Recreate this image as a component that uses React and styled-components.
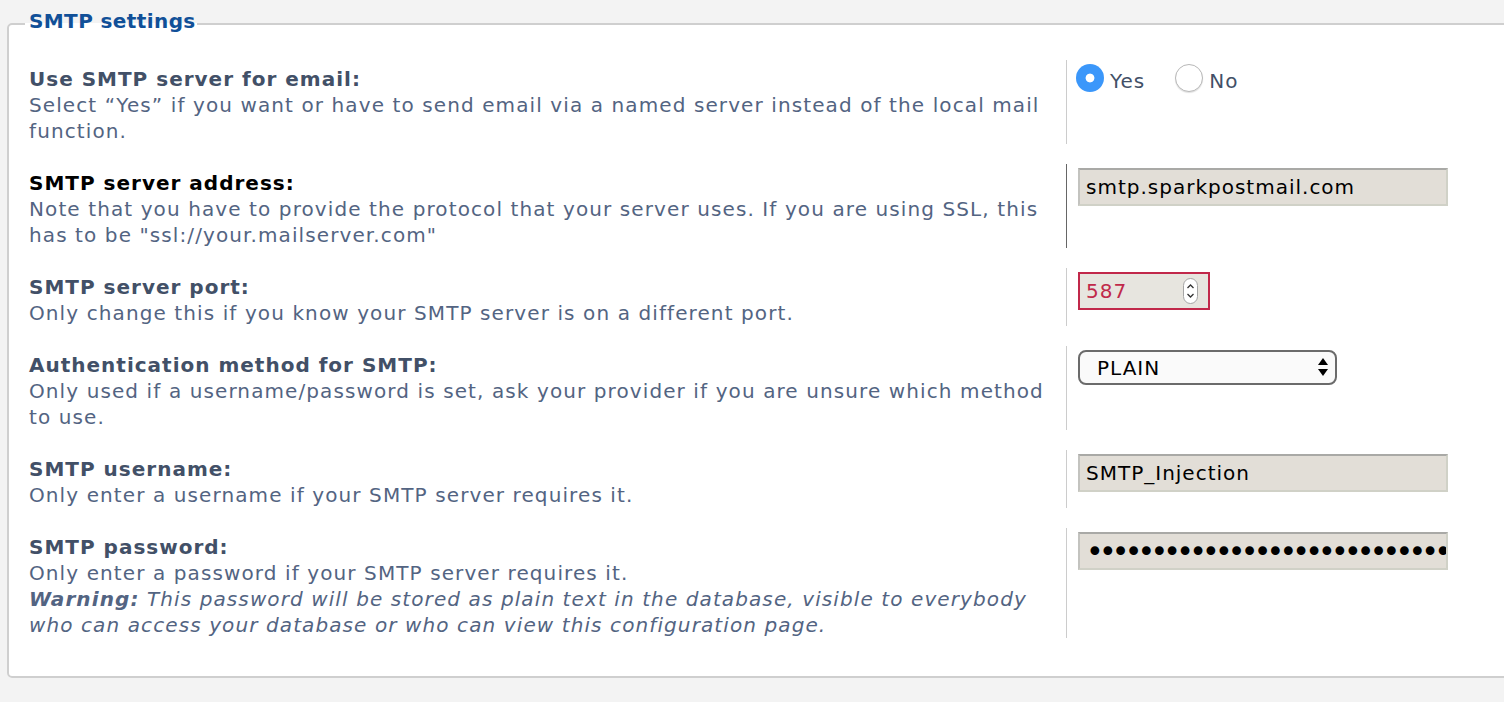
import React from 'react';
import styled, { createGlobalStyle } from 'styled-components';

const GlobalStyle = createGlobalStyle`
  html, body {
    margin: 0;
    background: #f3f3f3;
    overflow: hidden;
  }
  body {
    font-family: "DejaVu Sans", Verdana, sans-serif;
    letter-spacing: 1.1px;
  }
`;

const Page = styled.div`
  width: 1560px;
  padding: 8px 0 24px 7px;
`;

const Fieldset = styled.fieldset`
  margin: 0;
  border: 2px solid #cfcfcf;
  border-radius: 5px;
  background: #ffffff;
  padding: 20px 0 38px 20px;
`;

const Legend = styled.legend`
  margin-left: -4px;
  padding: 0 1px 6px 4px;
  font-size: 20px;
  line-height: 26px;
  font-weight: bold;
  letter-spacing: 0.4px;
  color: #115098;
`;

const Rows = styled.div`
  display: flex;
  flex-direction: column;
  gap: 20px;
`;

const Row = styled.dl`
  display: grid;
  grid-template-columns: 1037px 1fr;
  margin: 0;
`;

const Term = styled.dt`
  padding: 6px 10px 0 0;
  font-size: 20px;
  line-height: 26px;
`;

const Label = styled.label`
  display: block;
  font-weight: bold;
  letter-spacing: 1px;
  color: ${p => (p.$active ? '#000000' : '#425067')};
`;

const Explain = styled.span`
  display: block;
  color: #536482;
`;

const Warning = styled.em`
  strong {
    font-weight: bold;
  }
`;

const Def = styled.dd`
  margin: 0;
  border-left: 1px solid ${p => (p.$active ? '#666666' : '#cccccc')};
  padding: 4px 0 0 11px;
`;

const RadioGroup = styled.div`
  display: flex;
  align-items: center;
  height: 28px;
  margin-left: -2px;
`;

const RadioLabel = styled.label`
  display: inline-flex;
  align-items: center;
  gap: 6px;
  margin-right: 30px;
  font-size: 20px;
  letter-spacing: 1px;
  color: #425067;
  padding-top: 5px;
`;

const Radio = styled.input`
  appearance: none;
  margin: -5px 0 0 0;
  width: 28px;
  height: 28px;
  border-radius: 50%;
  box-sizing: border-box;
  background: #ffffff;
  border: 1px solid #b8b8b8;
  box-shadow: 0 1px 1px rgba(0, 0, 0, 0.12);

  &:checked {
    border: none;
    box-shadow: none;
    background: radial-gradient(circle, #ffffff 0 4px, #3b97fa 4.8px);
  }
`;

const TextInput = styled.input`
  box-sizing: border-box;
  width: 370px;
  height: 38px;
  margin: 0;
  padding: 0 0 0 6px;
  border-style: solid;
  border-width: 2px;
  border-color: #a9a9a6 #d0d1c7 #d0d1c7 #c3c3bf;
  background: #e2ded7;
  font-family: "DejaVu Sans", Verdana, sans-serif;
  font-size: ${p => (p.type === 'password' ? '30px' : '20px')};
  letter-spacing: ${p => (p.type === 'password' ? '-4.8px' : '1px')};
  color: #000000;
  outline: none;
`;

const PortBox = styled.div`
  box-sizing: border-box;
  display: flex;
  align-items: center;
  width: 132px;
  height: 38px;
  border: 2px solid #c1284a;
  background: #e7e5df;
  padding: 0 10px 0 6px;
`;

const PortInput = styled.input`
  flex: 1;
  min-width: 0;
  border: none;
  padding: 0;
  background: transparent;
  font-family: "DejaVu Sans", Verdana, sans-serif;
  font-size: 20px;
  letter-spacing: 1px;
  color: #c0294a;
  outline: none;
`;

const Spinner = styled.span`
  box-sizing: border-box;
  display: flex;
  align-items: center;
  justify-content: center;
  width: 15px;
  height: 26px;
  border-radius: 8px;
  background: #ffffff;
  border: 1px solid #a5a5a5;
`;

const SelectWrap = styled.div`
  position: relative;
  width: 259px;
  height: 35px;
`;

const Select = styled.select`
  appearance: none;
  box-sizing: border-box;
  width: 100%;
  height: 100%;
  margin: 0;
  padding: 0 0 0 17px;
  border: 2px solid #6b6b6b;
  border-radius: 8px;
  background: #fafafa;
  font-family: "DejaVu Sans", Verdana, sans-serif;
  font-size: 20px;
  letter-spacing: 1px;
  color: #000000;
  outline: none;
`;

const SelectArrows = styled.svg`
  position: absolute;
  right: 9px;
  top: 8px;
  pointer-events: none;
`;

const App = () => {
  return (
    <>
      <GlobalStyle />
      <Page>
        <Fieldset>
          <Legend>SMTP settings</Legend>
          <Rows>
            <Row>
              <Term>
                <Label>Use SMTP server for email:</Label>
                <Explain>
                  Select “Yes” if you want or have to send email via a named server instead of the local mail function.
                </Explain>
              </Term>
              <Def>
                <RadioGroup>
                  <RadioLabel>
                    <Radio type="radio" name="smtp" defaultChecked />
                    Yes
                  </RadioLabel>
                  <RadioLabel>
                    <Radio type="radio" name="smtp" />
                    No
                  </RadioLabel>
                </RadioGroup>
              </Def>
            </Row>

            <Row>
              <Term>
                <Label $active>SMTP server address:</Label>
                <Explain>
                  Note that you have to provide the protocol that your server uses. If you are using SSL, this has to be "ssl://your.mailserver.com"
                </Explain>
              </Term>
              <Def $active>
                <TextInput type="text" defaultValue="smtp.sparkpostmail.com" />
              </Def>
            </Row>

            <Row>
              <Term>
                <Label>SMTP server port:</Label>
                <Explain>Only change this if you know your SMTP server is on a different port.</Explain>
              </Term>
              <Def>
                <PortBox>
                  <PortInput type="text" defaultValue="587" />
                  <Spinner>
                    <svg width="9" height="18" viewBox="0 0 9 18" fill="none" stroke="#333" strokeWidth="1.3">
                      <path d="M1.5 6 L4.5 3 L7.5 6" />
                      <path d="M1.5 12 L4.5 15 L7.5 12" />
                    </svg>
                  </Spinner>
                </PortBox>
              </Def>
            </Row>

            <Row>
              <Term>
                <Label>Authentication method for SMTP:</Label>
                <Explain>
                  Only used if a username/password is set, ask your provider if you are unsure which method to use.
                </Explain>
              </Term>
              <Def>
                <SelectWrap>
                  <Select defaultValue="PLAIN">
                    <option>PLAIN</option>
                    <option>LOGIN</option>
                    <option>CRAM-MD5</option>
                  </Select>
                  <SelectArrows width="10" height="19" viewBox="0 0 10 19">
                    <path d="M5 0 L10 7 L0 7 Z" fill="#000" />
                    <path d="M0 11 L10 11 L5 18 Z" fill="#000" />
                  </SelectArrows>
                </SelectWrap>
              </Def>
            </Row>

            <Row>
              <Term>
                <Label>SMTP username:</Label>
                <Explain>Only enter a username if your SMTP server requires it.</Explain>
              </Term>
              <Def>
                <TextInput type="text" defaultValue="SMTP_Injection" />
              </Def>
            </Row>

            <Row>
              <Term>
                <Label>SMTP password:</Label>
                <Explain>
                  Only enter a password if your SMTP server requires it.
                  <br />
                  <Warning>
                    <strong>Warning:</strong> This password will be stored as plain text in the database, visible to everybody who can access your database or who can view this configuration page.
                  </Warning>
                </Explain>
              </Term>
              <Def>
                <TextInput type="password" defaultValue="sparkpostapikey0123456789abcdef0123" />
              </Def>
            </Row>
          </Rows>
        </Fieldset>
      </Page>
    </>
  );
};

export default App;
